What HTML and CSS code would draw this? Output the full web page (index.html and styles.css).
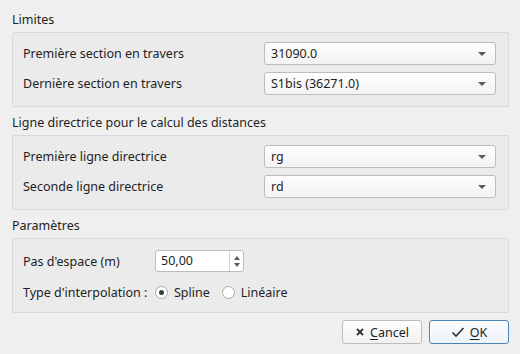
FILE: index.html
```html
<!DOCTYPE html>
<html lang="fr">
<head>
    <meta charset="UTF-8">
    <title>Limites</title>
    <link rel="stylesheet" href="styles.css">
</head>
<body>
    <div class="dialog">
        <div class="section">
            <div class="section-title">Limites</div>
            <div class="group">
                <div class="row">
                    <span class="label">Première section en travers</span>
                    <div class="combo">31090.0<span class="arrow"></span></div>
                </div>
                <div class="row">
                    <span class="label">Dernière section en travers</span>
                    <div class="combo">S1bis (36271.0)<span class="arrow"></span></div>
                </div>
            </div>
        </div>

        <div class="section">
            <div class="section-title">Ligne directrice pour le calcul des distances</div>
            <div class="group">
                <div class="row">
                    <span class="label">Première ligne directrice</span>
                    <div class="combo">rg<span class="arrow"></span></div>
                </div>
                <div class="row">
                    <span class="label">Seconde ligne directrice</span>
                    <div class="combo">rd<span class="arrow"></span></div>
                </div>
            </div>
        </div>

        <div class="section">
            <div class="section-title">Paramètres</div>
            <div class="group params">
                <div class="row">
                    <span class="label">Pas d'espace (m)</span>
                    <div class="spinbox">
                        <span class="spin-value">50,00</span>
                        <span class="spin-buttons">
                            <span class="spin-up"></span>
                            <span class="spin-down"></span>
                        </span>
                    </div>
                </div>
                <div class="row">
                    <span class="label">Type d'interpolation :</span>
                    <div class="radios">
                        <label class="radio"><span class="radio-dot checked"></span>Spline</label>
                        <label class="radio"><span class="radio-dot"></span>Linéaire</label>
                    </div>
                </div>
            </div>
        </div>

        <div class="buttons">
            <button class="btn">
                <svg width="10" height="10" viewBox="0 0 10 10"><path d="M2 2 L8 8 M8 2 L2 8" stroke="#333" stroke-width="1.8" fill="none"/></svg>
                <span><u>C</u>ancel</span>
            </button>
            <button class="btn btn-default">
                <svg width="14" height="12" viewBox="0 0 14 12"><path d="M1.5 6.5 L5 10 L12.5 2" stroke="#333" stroke-width="1.6" fill="none"/></svg>
                <span><u>O</u>K</span>
            </button>
        </div>
    </div>
</body>
</html>
```

FILE: styles.css
```css
body {
    margin: 0;
    background-color: #efefef;
    font-family: 'Noto Sans', 'Open Sans', sans-serif;
    font-size: 12.5px;
    color: #1e1e1e;
}
.dialog {
    padding: 11px 11px 0 12px;
}
.section {
    margin-bottom: 7px;
}
.section-title {
    line-height: 18px;
    margin-bottom: 3px;
}
.group {
    background-color: #ebebeb;
    border: 1px solid #d9d9d9;
    border-radius: 2px;
    padding: 9px 12px 11px 10px;
    display: grid;
    grid-template-columns: 241px 1fr;
    row-gap: 7px;
}
.row {
    display: contents;
}
.label {
    display: flex;
    align-items: center;
    height: 23px;
}
.combo {
    position: relative;
    height: 21px;
    line-height: 21px;
    padding: 0 6px;
    border: 1px solid #bcbcbc;
    border-radius: 3px;
    background: linear-gradient(#fdfdfd, #f3f3f3);
}
.arrow {
    position: absolute;
    right: 9px;
    top: 9px;
    border-left: 4px solid transparent;
    border-right: 4px solid transparent;
    border-top: 4px solid #5a5a5a;
}
.params {
    grid-template-columns: 132px 1fr;
    padding-top: 11px;
    padding-bottom: 9px;
    row-gap: 9px;
}
.params .label {
    height: 22px;
}
.spinbox {
    width: 87px;
    height: 20px;
    border: 1px solid #bcbcbc;
    border-radius: 3px;
    background-color: #fff;
    display: flex;
    align-self: center;
}
.spin-value {
    flex: 1;
    line-height: 20px;
    padding-left: 5px;
}
.spin-buttons {
    width: 13px;
    border-left: 1px solid #d4d4d4;
    display: flex;
    flex-direction: column;
    align-items: center;
    justify-content: center;
    gap: 3px;
}
.spin-up {
    border-left: 3.5px solid transparent;
    border-right: 3.5px solid transparent;
    border-bottom: 4px solid #5a5a5a;
}
.spin-down {
    border-left: 3.5px solid transparent;
    border-right: 3.5px solid transparent;
    border-top: 4px solid #5a5a5a;
}
.radios {
    display: flex;
    align-items: center;
    gap: 12px;
}
.radio {
    display: flex;
    align-items: center;
    gap: 6px;
}
.radio-dot {
    width: 11px;
    height: 11px;
    border: 1px solid #a9a9a9;
    border-radius: 50%;
    background: #fff;
    position: relative;
}
.radio-dot.checked::after {
    content: "";
    position: absolute;
    left: 3px;
    top: 3px;
    width: 5px;
    height: 5px;
    border-radius: 50%;
    background: #3a3a3a;
}
.buttons {
    display: flex;
    justify-content: flex-end;
    gap: 7px;
}
.btn {
    width: 80px;
    height: 24px;
    display: flex;
    align-items: center;
    justify-content: center;
    gap: 5px;
    font-family: inherit;
    font-size: 12.5px;
    color: #1e1e1e;
    border: 1px solid #bcbcbc;
    border-radius: 3px;
    background: linear-gradient(#fdfdfd, #f1f1f1);
    padding: 0;
}
.btn u {
    text-underline-offset: 2px;
}
.btn-default {
    border-color: #4a86b8;
    background: linear-gradient(#fbfdff, #eef3f8);
}
```
